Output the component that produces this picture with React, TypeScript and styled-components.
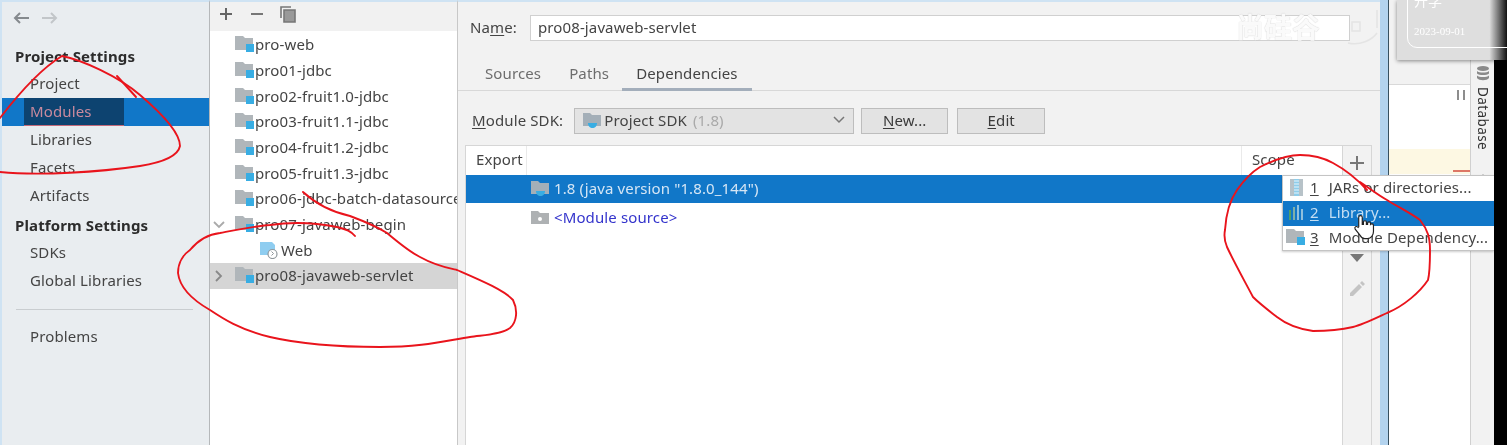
import React from 'react'
import styled, { createGlobalStyle } from 'styled-components'

const Global = createGlobalStyle`
  html, body { margin: 0; padding: 0; background: #000; }
  * { box-sizing: border-box; }
`

const Screen = styled.div`
  position: relative;
  width: 1507px;
  height: 445px;
  overflow: hidden;
  display: flex;
  background: #000;
  font-family: "Noto Sans", sans-serif;
  font-size: 15px;
  letter-spacing: 0.12px;
  color: #3a3a3a;
  filter: blur(0.5px);
`
const Sidebar = styled.aside`
  width: 210px;
  flex: none;
  background: #e9edf0;
  border-left: 2px solid #cfe3f3;
  border-top: 2px solid #cfe3f3;
  border-right: 1px solid #b5b8ba;
`
const NavArrows = styled.div`
  height: 41px;
  padding: 9px 0 0 10px;
  display: flex;
  gap: 11px;
`
const SectionTitle = styled.div<{ $gap?: number }>`
  height: 28px;
  line-height: 26px;
  padding-left: 13px;
  margin-top: ${({ $gap }) => $gap ?? 0}px;
  margin-bottom: -1px;
  font-weight: 700;
  color: #2c2c2c;
`
const SideItem = styled.div<{ $active?: boolean }>`
  height: 28px;
  line-height: 26px;
  padding-left: 28px;
  position: relative;
  color: ${({ $active }) => ($active ? '#c98a9e' : '#444')};
  background: ${({ $active }) => ($active ? '#1177c8' : 'transparent')};
`
const ActiveMark = styled.span`
  display: inline-block;
  margin-left: -6px;
  padding: 0 6px;
  width: 100px;
  height: 28px;
  background: #0d4370;
  border-bottom: 1px solid #c46a7a;
`
const SideRule = styled.div`
  height: 1px;
  background: #c9cdd0;
  margin: 14px 16px 13px 14px;
`
const TreePane = styled.section`
  width: 248px;
  flex: none;
  background: #fff;
  border-right: 1px solid #c8c8c8;
  border-top: 2px solid #cfe3f3;
  overflow: hidden;
`
const TreeToolbar = styled.div`
  height: 29px;
  background: #f1f1f1;
  padding: 4px 0 0 8px;
  display: flex;
  align-items: flex-start;
  gap: 15px;
`
const TreeList = styled.div`
  padding-top: 1px;
`
const TreeRow = styled.div<{ $indent?: number; $selected?: boolean }>`
  height: 25.67px;
  display: flex;
  align-items: center;
  white-space: nowrap;
  padding-left: ${({ $indent }) => $indent ?? 25}px;
  padding-bottom: 1px;
  background: ${({ $selected }) => ($selected ? '#d5d5d5' : 'transparent')};
  position: relative;
  color: #444;
`
const Chevron = styled.svg`
  position: absolute;
  left: 2px;
  top: 7px;
`
const Main = styled.main`
  width: 922px;
  flex: none;
  background: #f2f2f2;
  border-top: 2px solid #cfe3f3;
  display: flex;
  flex-direction: column;
`
const NameRow = styled.div`
  height: 39px;
  padding: 13px 0 0 12px;
  display: flex;
  align-items: flex-start;
`
const Label = styled.span`
  color: #444;
  line-height: 24px;
  white-space: nowrap;
  u { text-underline-offset: 2px; }
`
const NameInput = styled.div`
  margin-left: 13px;
  width: 820px;
  height: 26px;
  line-height: 22px;
  background: #fff;
  border: 1px solid #d0d0d0;
  padding-left: 7px;
  color: #444;
`
const Tabs = styled.div`
  height: 50px;
  border-bottom: 1px solid #d8d8d8;
  padding: 22px 0 0 18px;
  display: flex;
  align-items: flex-start;
`
const Tab = styled.div<{ $active?: boolean }>`
  height: 28px;
  padding: ${({ $active }) => ($active ? '0 14px' : '0 9px')};
  margin: ${({ $active }) => ($active ? '0 0 -1px -6px' : '0 10px -1px 0')};
  line-height: 20px;
  white-space: nowrap;
  color: ${({ $active }) => ($active ? '#444' : '#6d6d6d')};
  border-bottom: ${({ $active }) => ($active ? '3px solid #a3aebb' : 'none')};
`
const SdkRow = styled.div`
  height: 54px;
  padding: 17px 0 0 14px;
  display: flex;
  align-items: flex-start;
`
const Combo = styled.div`
  margin-left: 11px;
  width: 280px;
  height: 26px;
  background: #e3e3e3;
  border: 1px solid #bdbdbd;
  display: flex;
  align-items: center;
  padding: 0 8px 2px;
  gap: 2px;
  color: #444;
  white-space: nowrap;
  span { color: #a9a9a9; margin-left: 4px; }
  svg:last-child { margin-left: auto; }
`
const Button = styled.div<{ $w: number; $ml: number }>`
  width: ${({ $w }) => $w}px;
  margin-left: ${({ $ml }) => $ml}px;
  height: 26px;
  line-height: 22px;
  text-align: center;
  background: #e3e3e3;
  border: 1px solid #bdbdbd;
  color: #3a3a3a;
  u { text-underline-offset: 2px; }
`
const TableRow = styled.div`
  flex: 1;
  display: flex;
  padding-left: 7px;
  min-height: 0;
`
const Table = styled.div`
  width: 878px;
  background: #fff;
  border: 1px solid #d6d6d6;
  border-bottom: none;
  display: flex;
  flex-direction: column;
`
const TableHead = styled.div`
  height: 29px;
  flex: none;
  display: flex;
  align-items: center;
  color: #444;
  justify-content: space-between;
`
const HeadCell = styled.div<{ $w: number }>`
  width: ${({ $w }) => $w}px;
  height: 100%;
  line-height: 27px;
  padding-left: 10px;
  border-right: 1px solid #eaeaea;
  &:last-child { border-right: none; border-left: 1px solid #eaeaea; }
`
const DepRow = styled.div<{ $selected?: boolean }>`
  height: 28px;
  flex: none;
  display: flex;
  align-items: center;
  padding-left: 65px;
  padding-bottom: ${({ $selected }) => ($selected ? 2 : 0)}px;
  gap: 4px;
  white-space: nowrap;
  background: ${({ $selected }) => ($selected ? '#1177c8' : 'transparent')};
  color: ${({ $selected }) => ($selected ? '#d5e6f5' : '#3434cc')};
`
const SideTools = styled.div`
  width: 29px;
  flex: none;
  background: #f2f2f2;
  border-top: 1px solid #d6d6d6;
  border-right: 1px solid #d6d6d6;
  position: relative;
`
const ToolIcon = styled.svg<{ $top: number }>`
  position: absolute;
  left: 5px;
  top: ${({ $top }) => $top}px;
`
const EdgeGap = styled.div`
  width: 8px;
  flex: none;
`
const WindowEdge = styled.div`
  width: 9px;
  flex: none;
  background: #b3d3ee;
  border-right: 1px solid #38505f;
`
const IdeRest = styled.div`
  width: 81px;
  flex: none;
  background: #fff;
  display: flex;
  flex-direction: column;
  position: relative;
`
const IdeBar = styled.div`
  height: 85px;
  background: #f2f2f2;
  border-bottom: 1px solid #d9d9d9;
`
const Pause = styled.div`
  position: absolute;
  top: 90px;
  right: 5px;
  width: 8px;
  height: 10px;
  border-left: 2px solid #8d8d8d;
  border-right: 2px solid #8d8d8d;
`
const YellowBand = styled.div`
  margin-top: 64px;
  height: 25px;
  background: #fdf8e3;
  position: relative;
  &::after {
    content: '';
    position: absolute;
    right: 0;
    bottom: 2px;
    width: 17px;
    height: 2px;
    background: #dd7766;
  }
`
const ToolStrip = styled.div`
  width: 24px;
  flex: none;
  background: #f2f2f2;
  border-left: 1px solid #d0d0d0;
  padding-top: 66px;
  display: flex;
  flex-direction: column;
  align-items: center;
  gap: 6px;
`
const VerticalText = styled.div`
  writing-mode: vertical-rl;
  font-size: 13.500px;
  letter-spacing: 0.400px;
  color: #333;
  line-height: 16px;
`
const GearDot = styled.svg`
  margin-top: 17px;
`
const Popup = styled.div`
  position: absolute;
  left: 1282px;
  top: 175px;
  width: 212px;
  height: 76px;
  background: #fff;
  border: 1px solid #c4c4c4;
  border-right: none;
  box-shadow: 0 1px 2px rgba(0, 0, 0, 0.2);
`
const PopupRow = styled.div<{ $selected?: boolean }>`
  height: 25px;
  display: flex;
  align-items: center;
  padding: 0 0 3px 4px;
  white-space: nowrap;
  overflow: hidden;
  background: ${({ $selected }) => ($selected ? '#1177c8' : 'transparent')};
  color: ${({ $selected }) => ($selected ? '#c4def3' : '#444')};
  u { margin: 0 10px 0 5px; text-underline-offset: 2px; }
`
const IconSlot = styled.span`
  width: 18px;
  flex: none;
  display: flex;
  justify-content: center;
`
const Toast = styled.div`
  position: absolute;
  left: 1397px;
  top: 0;
  width: 110px;
  height: 60px;
  background: linear-gradient(90deg, #dedede 0 84%, #111 100%);
  box-shadow: 0 1px 4px rgba(0, 0, 0, 0.45);
`
const ToastFrame = styled.div`
  position: absolute;
  left: 10px;
  top: -10px;
  width: 110px;
  height: 58px;
  border: 1px solid #fff;
  border-radius: 10px;
`
const ToastText = styled.div<{ $top: number; $size: number }>`
  position: absolute;
  left: 17px;
  top: ${({ $top }) => $top}px;
  font-family: "Liberation Serif", "Noto Sans CJK SC", serif;
  font-size: ${({ $size }) => $size}px;
  letter-spacing: 0;
  color: #fff;
  white-space: nowrap;
`
const Watermark = styled.div`
  position: absolute;
  left: 1236px;
  top: 6px;
  display: flex;
  font-family: "Noto Sans CJK SC", sans-serif;
  font-size: 28px;
  font-weight: 700;
  line-height: 40px;
  letter-spacing: 0;
  color: #fafafa;
  text-shadow: 0 0 1px #bdbdbd;
`
const Overlay = styled.svg`
  position: absolute;
  left: 0;
  top: 0;
  pointer-events: none;
`

const ArrowLeft = ({ color }: { color: string }) => (
  <svg width="18" height="14" viewBox="0 0 18 14" fill="none" stroke={color} strokeWidth="2">
    <path d="M17 7H3M8 2L3 7l5 5" />
  </svg>
)
const ArrowRight = ({ color }: { color: string }) => (
  <svg width="18" height="14" viewBox="0 0 18 14" fill="none" stroke={color} strokeWidth="2">
    <path d="M1 7h14M10 2l5 5-5 5" />
  </svg>
)
const ModuleFolder = () => (
  <svg width="19" height="18" viewBox="0 0 19 18" style={{ marginRight: 1, flex: 'none' }}>
    <path d="M0 1h8l2 2h8v12H0z" fill="#b0b6ba" />
    <rect x="11" y="9" width="8" height="8" fill="#38ade3" />
  </svg>
)
const SdkFolder = () => (
  <svg width="19" height="17" viewBox="0 0 19 17" style={{ flex: 'none' }}>
    <path d="M0 1h7l2 2h9v11H0z" fill="#a4afb8" />
    <path d="M5 11h9c0 3-2 5-4.500 5S5 14 5 11z" fill="#38ade3" />
  </svg>
)
const SourceFolder = () => (
  <svg width="19" height="15" viewBox="0 0 19 15" style={{ flex: 'none' }}>
    <path d="M0 1h7l2 2h9v11H0z" fill="#aeb1b3" />
    <circle cx="9" cy="9" r="2" fill="#fff" />
  </svg>
)
const WebIcon = () => (
  <svg width="18" height="18" viewBox="0 0 18 18" style={{ marginRight: 3, flex: 'none' }}>
    <path d="M0 1h12l3 3v10H0z" fill="#8fcdf0" />
    <circle cx="12.500" cy="13" r="4.500" fill="#fff" stroke="#8f979c" strokeWidth="1.200" />
    <path d="M11.500 10.500l2 2-2 2" fill="none" stroke="#8f979c" />
  </svg>
)
const JarIcon = () => (
  <svg width="13" height="17" viewBox="0 0 13 17">
    <rect width="13" height="17" fill="#b7c2c8" />
    <rect x="4" width="5" height="17" fill="#8ecdea" />
    <path d="M4 2h5M4 5h5M4 8h5M4 11h5M4 14h5" stroke="#e8f4fb" />
  </svg>
)
const LibraryIcon = () => (
  <svg width="16" height="15" viewBox="0 0 16 15">
    <path d="M1 5h2v10H1z" fill="#4f9e6a" />
    <path d="M5 2h2v13H5z" fill="#7fb0a8" />
    <path d="M9 0h2v15H9z" fill="#8fc0dd" />
    <path d="M13 4h2v11h-2z" fill="#8fc0dd" />
  </svg>
)

const projects = [
  'pro-web',
  'pro01-jdbc',
  'pro02-fruit1.0-jdbc',
  'pro03-fruit1.1-jdbc',
  'pro04-fruit1.2-jdbc',
  'pro05-fruit1.3-jdbc',
  'pro06-jdbc-batch-datasource',
]

const App: React.FC = () => {
  return (
    <Screen>
      <Global />
      <Sidebar>
        <NavArrows>
          <ArrowLeft color="#858a8e" />
          <ArrowRight color="#c2c6c9" />
        </NavArrows>
        <SectionTitle>Project Settings</SectionTitle>
        <SideItem>Project</SideItem>
        <SideItem $active>
          <ActiveMark>Modules</ActiveMark>
        </SideItem>
        <SideItem>Libraries</SideItem>
        <SideItem>Facets</SideItem>
        <SideItem>Artifacts</SideItem>
        <SectionTitle $gap={2}>Platform Settings</SectionTitle>
        <SideItem>SDKs</SideItem>
        <SideItem>Global Libraries</SideItem>
        <SideRule />
        <SideItem>Problems</SideItem>
      </Sidebar>

      <TreePane>
        <TreeToolbar>
          <svg width="16" height="16" viewBox="0 0 16 16" stroke="#666" strokeWidth="2">
            <path d="M2 8h12M8 2v12" />
          </svg>
          <svg width="16" height="16" viewBox="0 0 16 16" stroke="#777" strokeWidth="2">
            <path d="M2 8h12" />
          </svg>
          <svg width="16" height="17" viewBox="0 0 16 17" fill="none" stroke="#777" strokeWidth="1.600">
            <path d="M1 12V1h10" />
            <path d="M4 4h11v12H4z" fill="#999" />
          </svg>
        </TreeToolbar>
        <TreeList>
          {projects.map((name) => (
            <TreeRow key={name}>
              <ModuleFolder />
              {name}
            </TreeRow>
          ))}
          <TreeRow>
            <Chevron width="14" height="12" viewBox="0 0 14 12" fill="none" stroke="#aaa" strokeWidth="1.800">
              <path d="M2 3l5 5 5-5" />
            </Chevron>
            <ModuleFolder />
            pro07-javaweb-begin
          </TreeRow>
          <TreeRow $indent={50}>
            <WebIcon />
            Web
          </TreeRow>
          <TreeRow $selected>
            <Chevron width="14" height="12" viewBox="0 0 14 12" fill="none" stroke="#888" strokeWidth="1.800">
              <path d="M4 1l5 5-5 5" />
            </Chevron>
            <ModuleFolder />
            pro08-javaweb-servlet
          </TreeRow>
        </TreeList>
      </TreePane>

      <Main>
        <NameRow>
          <Label>
            Na<u>m</u>e:
          </Label>
          <NameInput>pro08-javaweb-servlet</NameInput>
        </NameRow>
        <Tabs>
          <Tab>Sources</Tab>
          <Tab>Paths</Tab>
          <Tab $active>Dependencies</Tab>
        </Tabs>
        <SdkRow>
          <Label>
            <u>M</u>odule SDK:
          </Label>
          <Combo>
            <SdkFolder />
            Project SDK <span>(1.8)</span>
            <svg width="12" height="8" viewBox="0 0 12 8" fill="none" stroke="#777" strokeWidth="1.500">
              <path d="M1 1l5 5 5-5" />
            </svg>
          </Combo>
          <Button $w={87} $ml={7}>
            <u>N</u>ew...
          </Button>
          <Button $w={88} $ml={9}>
            <u>E</u>dit
          </Button>
        </SdkRow>
        <TableRow>
          <Table>
            <TableHead>
              <HeadCell $w={61}>Export</HeadCell>
              <HeadCell $w={101}>Scope</HeadCell>
            </TableHead>
            <DepRow $selected>
              <SdkFolder />
              1.8 (java version "1.8.0_144")
            </DepRow>
            <DepRow>
              <SourceFolder />
              &lt;Module source&gt;
            </DepRow>
          </Table>
          <SideTools>
            <ToolIcon $top={8} width="18" height="18" viewBox="0 0 18 18" stroke="#777" strokeWidth="2">
              <path d="M2 9h14M9 2v14" />
            </ToolIcon>
            <ToolIcon $top={103} width="18" height="18" viewBox="0 0 18 18" fill="#777">
              <path d="M2 5h14L9 13z" />
            </ToolIcon>
            <ToolIcon $top={134} width="18" height="18" viewBox="0 0 18 18" fill="#c4c4c4">
              <path d="M2 13l9-9 3 3-9 9H2zM12 3l2-2 3 3-2 2z" />
            </ToolIcon>
          </SideTools>
          <EdgeGap />
        </TableRow>
      </Main>

      <WindowEdge />
      <IdeRest>
        <IdeBar />
        <Pause />
        <YellowBand />
      </IdeRest>
      <ToolStrip>
        <svg width="14" height="15" viewBox="0 0 14 15" fill="#8a8a8a">
          <ellipse cx="7" cy="2.500" rx="6" ry="2.500" />
          <path d="M1 5c2 2 10 2 12 0v2.500c-2 2-10 2-12 0zM1 9.500c2 2 10 2 12 0V12c-2 3-10 3-12 0z" />
        </svg>
        <VerticalText>Database</VerticalText>
        <GearDot width="14" height="14" viewBox="0 0 14 14" fill="#8d8d8d">
          <path d="M7 1l2 3 4 1-2 3 0 4-4-1-4 1 0-4-2-3 4-1z" />
        </GearDot>
      </ToolStrip>

      <Watermark>尚硅谷</Watermark>

      <Toast>
        <ToastFrame />
        <ToastText $top={-10} $size={14}>
          开学
        </ToastText>
        <ToastText $top={25} $size={11}>
          2023-09-01
        </ToastText>
      </Toast>

      <Popup>
        <PopupRow>
          <IconSlot>
            <JarIcon />
          </IconSlot>
          <u>1</u>JARs or directories...
        </PopupRow>
        <PopupRow $selected>
          <IconSlot>
            <LibraryIcon />
          </IconSlot>
          <u>2</u>Library...
        </PopupRow>
        <PopupRow>
          <IconSlot>
            <ModuleFolder />
          </IconSlot>
          <u>3</u>Module Dependency...
        </PopupRow>
      </Popup>

      <Overlay width="1507" height="445" viewBox="0 0 1507 445" fill="none" stroke="#e9141c" strokeWidth="1.900" strokeLinecap="round">
        <path d="M0 118C20 92 42 68 62 56C82 60 118 76 140 95C160 112 180 132 180 146C178 156 165 162 140 166C100 172 40 176 0 172" />
        <path d="M117 76L136 97" />
        <path d="M303 192C316 204 332 212 350 216C366 222 376 226 387 233C400 244 410 252 420 257C436 266 448 268 457 270C480 280 504 290 513 300C518 310 517 322 510 328C500 335 482 335 470 337C440 342 420 347 380 347C340 347 300 344 270 337C240 330 222 318 210 310C196 302 180 290 178 273C178 262 184 254 190 250C200 238 210 234 220 233C236 230 256 226 270 225C290 222 312 222 337 227C346 229 352 232 355 236" />
        <path d="M1360 182C1372 190 1378 195 1387 200C1400 208 1412 214 1420 220C1428 230 1430 238 1430 250C1430 262 1430 272 1428 280C1420 292 1404 306 1387 313C1372 320 1362 325 1353 327C1340 330 1326 331 1313 331C1298 329 1286 324 1277 317C1268 310 1260 304 1253 297C1244 280 1234 262 1227 247C1224 240 1224 235 1225 230C1226 214 1230 200 1237 190C1244 180 1252 172 1260 167C1274 160 1288 155 1300 155C1312 155 1324 158 1333 163C1346 170 1358 180 1367 190" />
      </Overlay>

      <Overlay width="1507" height="445" viewBox="0 0 1507 445">
        <path d="M1348 43C1360 46 1372 40 1377 33M1377 10V28M1352 22h8v9h-8z" fill="none" stroke="#e4e4e4" strokeWidth="1.500" />
        <g transform="translate(1354 215) scale(1.180)" fill="#fff" stroke="#222" strokeWidth="1">
          <path d="M4 10V2c0-2 3-2 3 0v6l1 0V6c0-1.500 2.500-1.500 2.500 0v2l1 0V7c0-1.500 2.500-1.500 2.500 0v1c1-1 2.500-.5 2.500 1v5c0 3-2 6-5 6H9c-2 0-3-1-4-3l-4-5c-1-2 1-3 2.500-1.500z" />
        </g>
      </Overlay>
    </Screen>
  )
}

export default App
